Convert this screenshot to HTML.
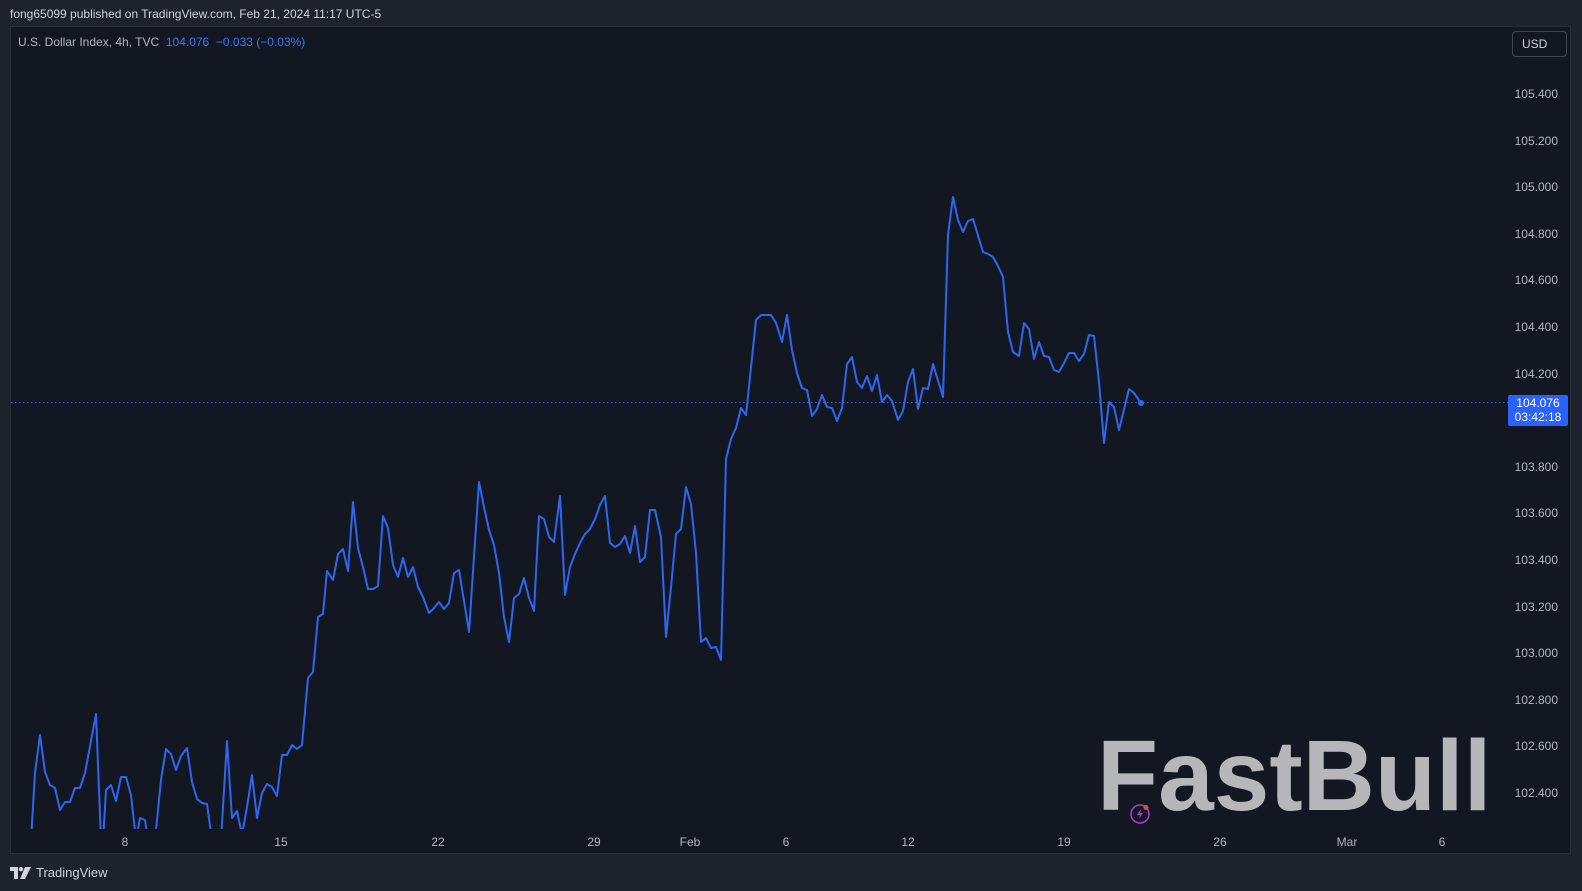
<!DOCTYPE html>
<html><head><meta charset="utf-8"><style>
html,body{margin:0;padding:0;width:1582px;height:891px;overflow:hidden;background:#1e222d;font-family:"Liberation Sans",sans-serif;}
.hdr{position:absolute;left:10px;top:7px;font-size:12px;color:#d1d4dc;}
.chart{position:absolute;left:10px;top:26px;width:1561px;height:828px;background:#131722;border:1px solid #2a2e39;box-sizing:border-box;}
.leg{position:absolute;left:18px;top:35px;font-size:12px;color:#b2b5be;}
.leg span{color:#3d74f0;}
.usd{position:absolute;left:1512px;top:31px;width:55px;height:26px;border:1px solid #434651;border-radius:4px;box-sizing:border-box;color:#d1d4dc;font-size:12px;line-height:24px;padding-left:9px;background:#131722;}
.pl{position:absolute;right:24px;font-size:12px;color:#b2b5be;transform:translateY(-7px);}
.tl{position:absolute;top:835px;font-size:12px;color:#b2b5be;transform:translateX(-50%);}
.box{position:absolute;left:1508px;top:395px;width:60px;height:31px;background:#2962ff;border-radius:2px;color:#fff;font-size:12px;text-align:center;line-height:14px;padding-top:1px;box-sizing:border-box;}
.fb{position:absolute;left:1097px;top:716px;font-size:100px;font-weight:bold;color:#b6b7bb;letter-spacing:0px;line-height:120px;}
.tv{position:absolute;left:10px;top:865px;font-size:13px;color:#d1d4dc;display:flex;align-items:center;gap:4px;}
</style></head><body>
<div class="hdr">fong65099 published on TradingView.com, Feb 21, 2024 11:17 UTC-5</div>
<div class="chart"></div>
<div class="leg">U.S. Dollar Index, 4h, TVC&nbsp; <span>104.076&nbsp; −0.033 (−0.03%)</span></div>
<div class="usd">USD</div>
<div class="pl" style="top:94px">105.400</div>
<div class="pl" style="top:141px">105.200</div>
<div class="pl" style="top:187px">105.000</div>
<div class="pl" style="top:234px">104.800</div>
<div class="pl" style="top:280px">104.600</div>
<div class="pl" style="top:327px">104.400</div>
<div class="pl" style="top:374px">104.200</div>
<div class="pl" style="top:467px">103.800</div>
<div class="pl" style="top:513px">103.600</div>
<div class="pl" style="top:560px">103.400</div>
<div class="pl" style="top:607px">103.200</div>
<div class="pl" style="top:653px">103.000</div>
<div class="pl" style="top:700px">102.800</div>
<div class="pl" style="top:746px">102.600</div>
<div class="pl" style="top:793px">102.400</div>
<div class="fb">FastBull</div>
<svg style="position:absolute;left:1128px;top:802px" width="24" height="24" viewBox="0 0 24 24"><circle cx="12" cy="12" r="9" fill="none" stroke="#a040d0" stroke-width="1.6"/><path d="M13 7 L9 13 H12 L11 17 L15 11 H12 Z" fill="#a040d0"/><circle cx="18" cy="5.5" r="2.5" fill="#e94545"/></svg>
<div class="tl" style="left:125px">8</div>
<div class="tl" style="left:281px">15</div>
<div class="tl" style="left:438px">22</div>
<div class="tl" style="left:594px">29</div>
<div class="tl" style="left:690px">Feb</div>
<div class="tl" style="left:786px">6</div>
<div class="tl" style="left:908px">12</div>
<div class="tl" style="left:1064px">19</div>
<div class="tl" style="left:1220px">26</div>
<div class="tl" style="left:1347px">Mar</div>
<div class="tl" style="left:1442px">6</div>
<svg style="position:absolute;left:0;top:0" width="1582" height="891">
<defs><clipPath id="c"><rect x="11" y="27" width="1560" height="802"/></clipPath></defs>
<line x1="11" y1="402.5" x2="1508" y2="402.5" stroke="#2962ff" stroke-width="1" stroke-dasharray="1.5,2.5"/>
<g clip-path="url(#c)">
<polyline fill="none" stroke="#2f66f0" stroke-width="2" stroke-linejoin="round" points="31,840 35,773 40,735 45,772 50,785 55,788 60,810 65,802 70,802 75,788 80,788 85,773 96,714 101,840 103,840 106,790 111,785 116,801 121,777 126,777 131,795 136,840 140,818 145,820 148,840 155,840 161,780 166,749 171,754 176,770 181,756 187,748 192,782 197,799 202,803 207,804 212,840 221,840 227,741 232,818 237,811 242,835 247,807 252,775 257,818 262,793 267,784 272,787 277,796 282,755 287,755 292,745 297,749 302,745 308,678 313,672 318,617 323,614 327,571 333,580 338,554 343,549 348,571 353,502 358,548 363,567 368,589 373,589 378,586 383,516 388,528 393,565 398,577 403,558 408,577 413,567 418,587 423,597 429,613 434,608 439,602 444,609 449,603 454,573 459,570 469,632 479,482 484,507 489,530 494,545 499,573 504,617 509,642 514,598 519,594 524,578 529,598 534,611 539,516 544,519 549,537 554,542 560,496 565,595 570,567 575,554 580,543 585,534 590,529 595,519 600,505 605,496 610,543 615,547 620,544 625,536 630,553 635,526 640,562 645,557 650,510 655,510 661,537 666,637 671,587 676,534 681,529 686,487 691,504 696,553 701,642 706,638 711,648 716,647 721,660 726,459 731,439 736,428 741,408 746,415 756,320 761,315 771,315 776,323 782,342 787,315 792,350 797,373 802,388 807,390 812,416 817,409 822,395 827,407 832,408 837,421 842,408 847,364 852,357 857,382 862,388 867,376 872,391 877,375 882,402 887,395 892,401 898,420 903,411 908,382 913,369 918,409 923,388 928,389 933,364 943,397 948,235 953,197 958,220 963,232 968,221 973,219 983,252 988,254 993,257 998,266 1003,277 1008,332 1013,352 1019,356 1024,323 1029,329 1034,359 1039,342 1044,356 1049,357 1054,370 1059,372 1064,363 1069,353 1074,353 1079,361 1084,354 1089,335 1094,336 1099,382 1104,443 1109,402 1114,407 1119,430 1129,389 1134,393 1141,403"/>
<circle cx="1141" cy="403" r="3" fill="#2f66f0"/>
</g>
</svg>
<div class="box">104.076<br>03:42:18</div>
<div class="tv"><svg width="22" height="12" viewBox="0 0 22 12"><path d="M0 0 H8 V12 H4 V4 H0 Z" fill="#d1d4dc"/><circle cx="11" cy="2.2" r="2.2" fill="#d1d4dc"/><path d="M15 0 H21 L15 12 H10 Z" fill="#d1d4dc"/></svg><span>TradingView</span></div>
</body></html>
